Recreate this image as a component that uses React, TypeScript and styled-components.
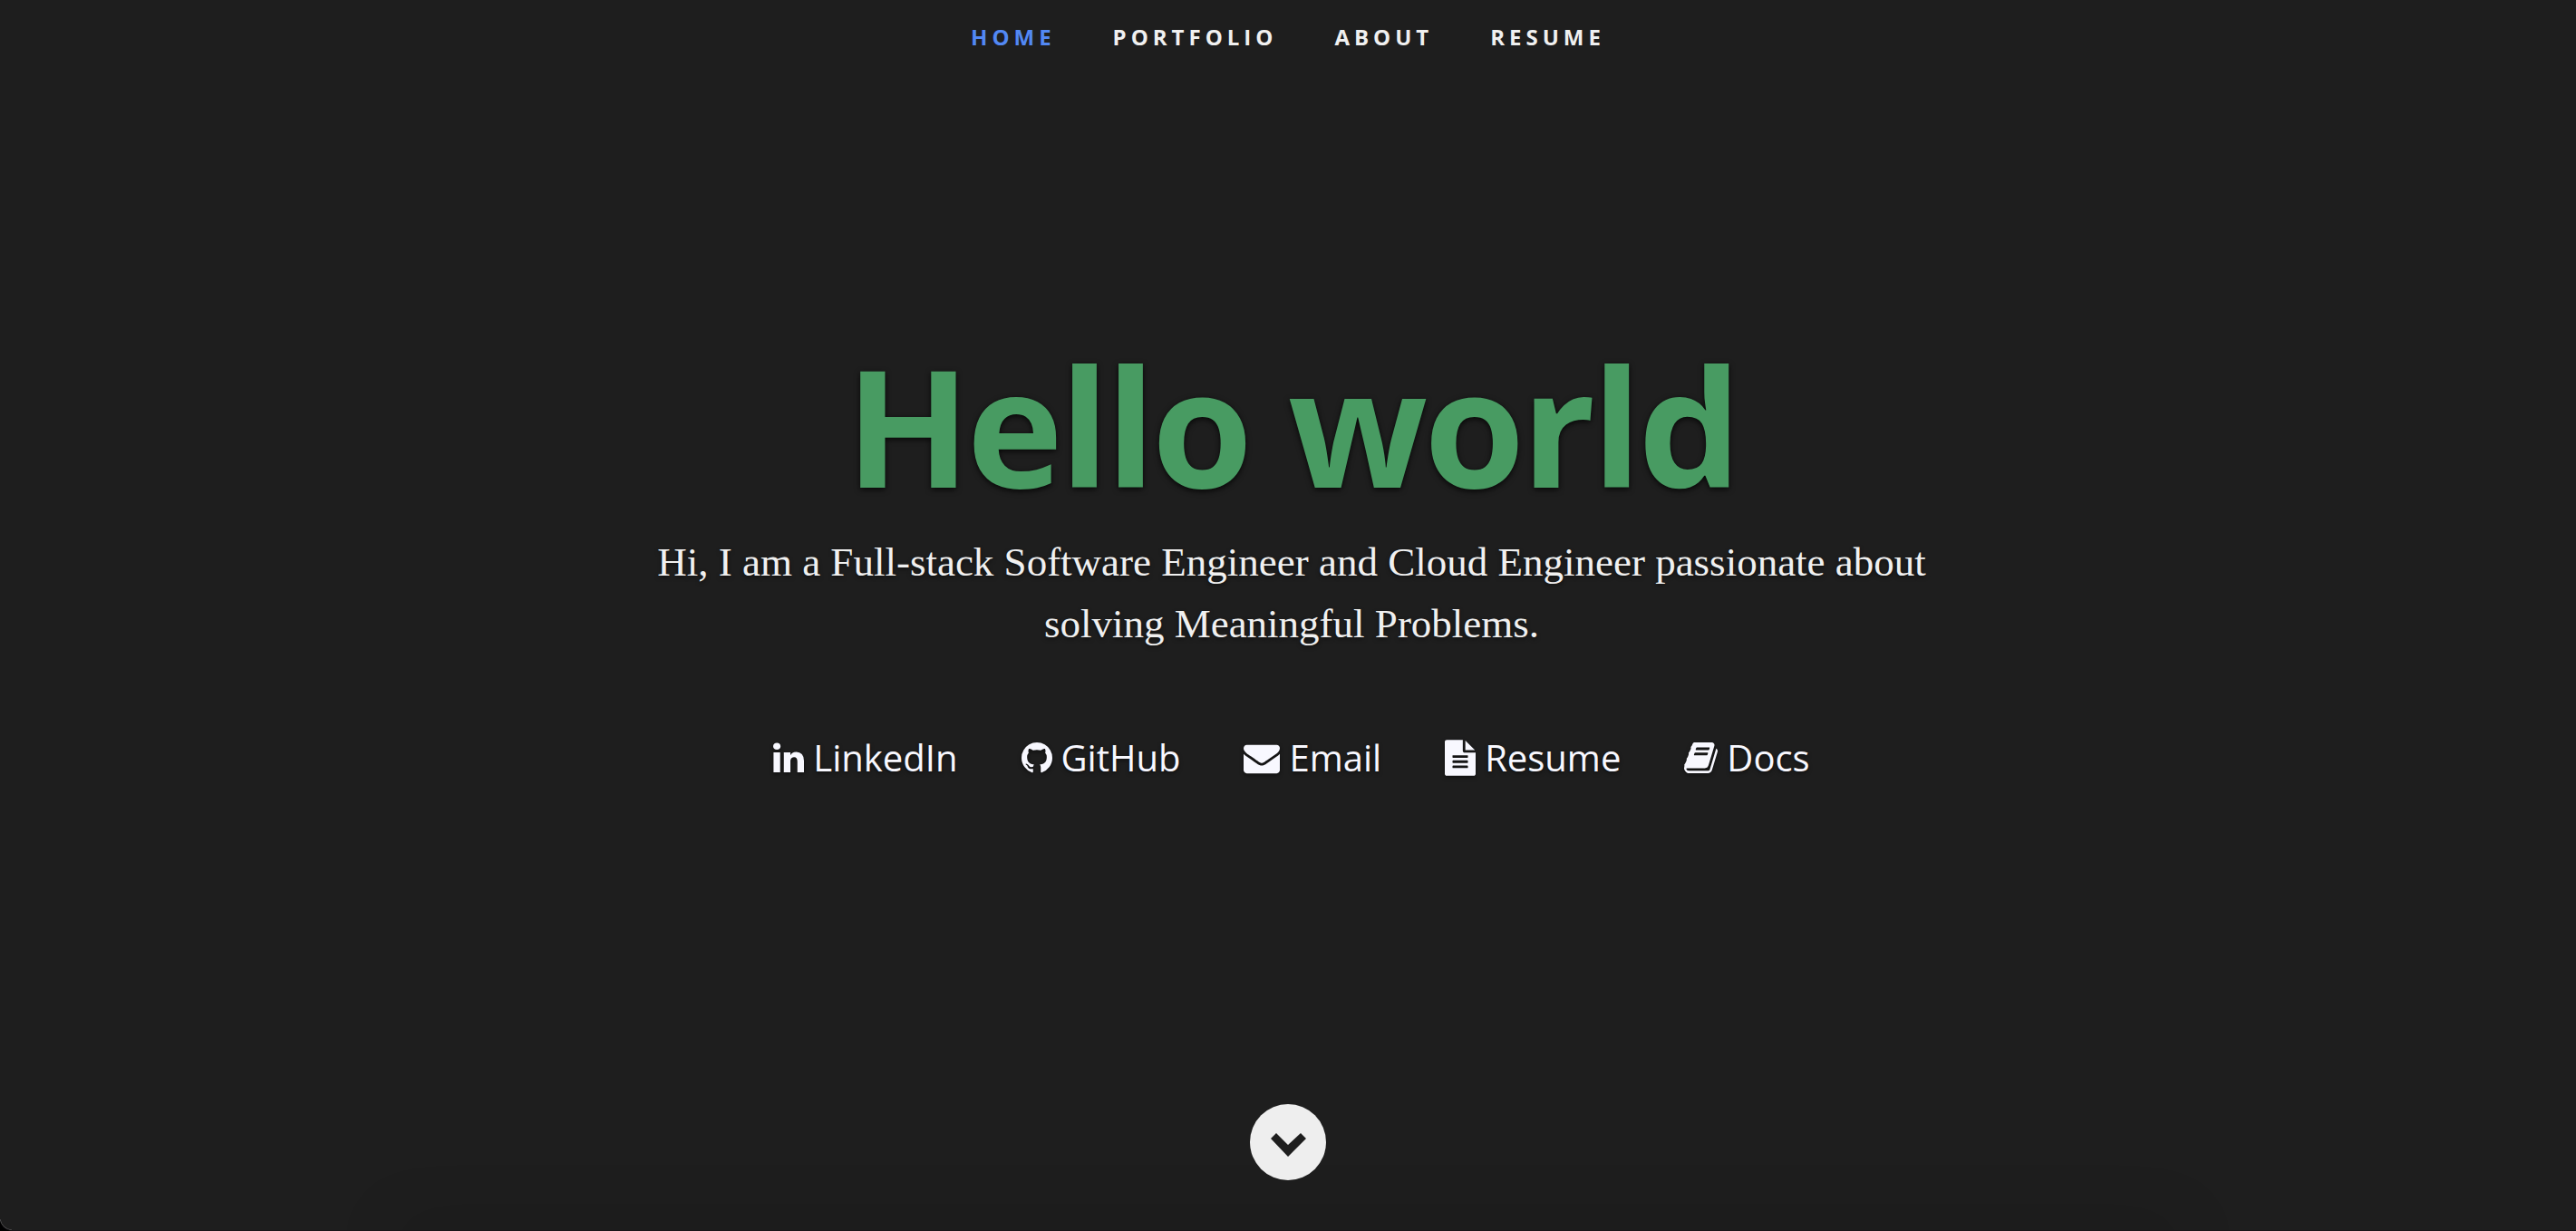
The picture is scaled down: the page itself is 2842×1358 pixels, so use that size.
import React from "react";
import styled, { createGlobalStyle } from "styled-components";

const GlobalStyle = createGlobalStyle`
  *, *::before, *::after { box-sizing: border-box; }
  body { margin: 0; background: #000000; }
`;

const sans = `"Open Sans", "Noto Sans", sans-serif`;

const Page = styled.header`
  position: relative;
  display: flex;
  flex-direction: column;
  align-items: center;
  min-height: 100vh;
  overflow: hidden;
  border-bottom: 1px solid #19151a;
  border-bottom-left-radius: 14px;
  background: #1e1e1e;
  font-family: ${sans};
  text-align: center;
`;

const Nav = styled.nav`
  width: 100%;
`;

const NavList = styled.ul`
  display: flex;
  justify-content: center;
  gap: 63px;
  margin: 0;
  padding: 17px 0;
  list-style: none;
`;

const NavLink = styled.a<{ $active?: boolean }>`
  display: block;
  color: ${(p) => (p.$active ? "#5288f4" : "#f0f0f0")};
  font-size: 24px;
  font-weight: 700;
  line-height: 48px;
  letter-spacing: 5px;
  text-decoration: none;
  text-transform: uppercase;
`;

const Banner = styled.main`
  flex: 1;
  display: flex;
  flex-direction: column;
  align-items: center;
  padding: 288px 28px 0 36px;
`;

const Title = styled.h1`
  margin: 0 0 18px;
  color: #489b62;
  font-size: 180px;
  font-weight: 700;
  line-height: 198px;
  letter-spacing: -4px;
  text-shadow: 0 2px 6px rgba(0, 0, 0, 0.8);
`;

const Intro = styled.p`
  max-width: 1500px;
  margin: 0;
  color: #f0f0f0;
  font-family: "Liberation Serif", serif;
  font-size: 45px;
  line-height: 68px;
  text-shadow: 0 2px 4px rgba(0, 0, 0, 0.5);
`;

const Social = styled.ul`
  display: flex;
  gap: 70px;
  margin: 84px 0 0;
  padding: 0;
  list-style: none;
`;

const SocialLink = styled.a`
  display: flex;
  align-items: center;
  gap: 10px;
  color: #f8f8ff;
  font-size: 40px;
  line-height: 60px;
  text-decoration: none;
  text-shadow: 0 2px 4px rgba(0, 0, 0, 0.5);

  svg {
    height: 40px;
    fill: currentColor;
    filter: drop-shadow(0 2px 2px rgba(0, 0, 0, 0.5));
  }
`;

const ScrollButton = styled.button`
  z-index: 1;
  width: 84px;
  height: 84px;
  margin: 0 0 55px;
  padding: 0;
  border: 0;
  border-radius: 50%;
  background: #eeeeee;
  cursor: pointer;

  svg {
    display: block;
    fill: #1e1e1e;
  }
`;

const BottomShade = styled.div`
  position: absolute;
  right: 440px;
  bottom: -24px;
  left: 440px;
  height: 20px;
  box-shadow: 0 0 72px rgba(0, 0, 0, 0.3);
`;

const CornerEdge = styled.svg`
  position: absolute;
  bottom: -1px;
  left: 0;
  width: 14px;
  height: 14px;
  fill: none;
  stroke: #5c5c5c;
`;

const sections = ["Home", "Portfolio", "About", "Resume"];

const links = [
  {
    label: "LinkedIn",
    width: 34,
    box: "128 0 1536 1792",
    path: "M477 625v991h-330v-991h330zm21-306q1 73-50.5 122t-135.5 49h-2q-82 0-132-49t-50-122q0-74 51.5-122.5t134.5-48.5 133 48.5 51 122.5zm1166 729v568h-329v-530q0-105-40.5-164.5t-126.5-59.5q-63 0-105.5 34.5t-63.5 85.5q-11 30-11 81v553h-329q2-399 2-647t-1-296l-1-48h329v144h-2q20-32 41-56t56.5-52 87-43.5 114.5-15.5q171 0 275 113.5t104 332.5z",
  },
  {
    label: "GitHub",
    width: 34,
    box: "128 0 1536 1792",
    path: "M896 128q209 0 385.5 103t279.5 279.5 103 385.5q0 251-146.5 451.5t-378.5 277.5q-27 5-40-7t-13-30q0-3 .5-76.5t.5-134.5q0-97-52-142 57-6 102.5-18t94-39 81-66.5 53-105 20.5-150.5q0-119-79-206 37-91-8-204-28-9-81 11t-92 44l-38 24q-93-26-192-26t-192 26q-16-11-42.5-27t-83.5-38.5-85-13.5q-45 113-8 204-79 87-79 206 0 85 20.5 150t52.5 105 80.5 67 94 39 102.5 18q-39 36-49 103-21 10-45 15t-57 5-65.5-21.5-55.5-62.5q-19-32-48.5-52t-49.5-24l-20-3q-21 0-29 4.5t-5 11.5 9 14 13 12l7 5q22 10 43.5 38t31.5 51l10 23q13 38 44 61.5t67 30 69.5 7 55.5-3.5l23-4q0 38 .5 88.5t.5 54.5q0 18-13 30t-40 7q-232-77-378.5-277.5t-146.5-451.5q0-209 103-385.5t279.5-279.5 385.5-103z",
  },
  {
    label: "Email",
    width: 40,
    box: "0 0 1792 1792",
    path: "M1792 710v794q0 66-47 113t-113 47h-1472q-66 0-113-47t-47-113v-794q44 49 101 87 362 246 497 345 57 42 92.5 65.5t94.5 48 110 24.5h2q51 0 110-24.5t94.5-48 92.5-65.5q170-123 498-345 57-39 100-87zm0-294q0 79-49 151t-122 123q-376 261-468 325-10 7-42.5 31t-54 38.5-52 32.5-57.5 27-50 9h-2q-23 0-50-9t-57.5-27-52-32.5-54-38.5-42.5-31q-91-64-262-182.5t-205-142.5q-62-42-117-115.5t-55-136.5q0-78 41.5-130t118.5-52h1472q65 0 112.5 47t47.5 113z",
  },
  {
    label: "Resume",
    width: 34,
    box: "128 0 1536 1792",
    path: "M1596 476q14 14 28 36h-472v-472q22 14 36 28zm-476 164h544v1056q0 40-28 68t-68 28h-1344q-40 0-68-28t-28-68v-1600q0-40 28-68t68-28h800v544q0 40 28 68t68 28zm160 736v-64q0-14-9-23t-23-9h-704q-14 0-23 9t-9 23v64q0 14 9 23t23 9h704q14 0 23-9t9-23zm0-256v-64q0-14-9-23t-23-9h-704q-14 0-23 9t-9 23v64q0 14 9 23t23 9h704q14 0 23-9t9-23zm0-256v-64q0-14-9-23t-23-9h-704q-14 0-23 9t-9 23v64q0 14 9 23t23 9h704q14 0 23-9t9-23z",
  },
  {
    label: "Docs",
    width: 37,
    box: "64 0 1664 1792",
    path: "M1703 478q40 57 18 129l-275 906q-19 64-76.5 107.5t-122.5 43.5h-923q-77 0-148.5-53.5t-99.5-131.5q-24-67-2-127 0-4 3-27t4-37q1-8-3-21.5t-3-19.5q2-11 8-21t16.5-23.5 16.5-23.5q23-38 45-91.5t30-91.5q3-10 .5-30t-.5-28q3-11 17-28t17-23q21-36 42-92t25-90q1-9-2.5-32t.5-28q4-13 22-30.5t22-22.5q19-26 42.5-84.5t27.5-96.5q1-8-3-25.5t-2-26.5q2-8 9-18t18-23 17-21q8-12 16.5-30.5t15-35 16-36 19.5-32 26.5-23.5 36-11.5 47.5 5.5l-1 3q38-9 51-9h761q74 0 114 56t18 130l-274 906q-36 119-71.5 153.5t-128.5 34.5h-869q-27 0-38 15-11 16-1 43 24 70 144 70h923q29 0 56-15.5t35-41.5l300-987q7-22 5-57 38 15 59 43zm-1064 2q-4 13 2 22.5t20 9.5h608q13 0 25.5-9.5t16.5-22.5l21-64q4-13-2-22.5t-20-9.5h-608q-13 0-25.5 9.5t-16.5 22.5zm-83 256q-4 13 2 22.5t20 9.5h608q13 0 25.5-9.5t16.5-22.5l21-64q4-13-2-22.5t-20-9.5h-608q-13 0-25.5 9.5t-16.5 22.5z",
  },
];

export default function App() {
  return (
    <>
      <GlobalStyle />
      <Page id="home">
        <Nav aria-label="Sections">
          <NavList>
            {sections.map((name, i) => (
              <li key={name}>
                <NavLink href={`#${name.toLowerCase()}`} $active={i === 0}>
                  {name}
                </NavLink>
              </li>
            ))}
          </NavList>
        </Nav>
        <Banner>
          <Title>Hello world</Title>
          <Intro>
            Hi, I am a Full-stack Software Engineer and Cloud Engineer passionate about solving
            Meaningful Problems.
          </Intro>
          <Social>
            {links.map((link) => (
              <li key={link.label}>
                <SocialLink href={`#${link.label.toLowerCase()}`}>
                  <svg width={link.width} viewBox={link.box} aria-hidden="true">
                    <path d={link.path} />
                  </svg>
                  <span>{link.label}</span>
                </SocialLink>
              </li>
            ))}
          </Social>
        </Banner>
        <ScrollButton type="button" aria-label="Scroll down">
          <svg viewBox="0 0 84 84" aria-hidden="true">
            <path d="M23 38l6-6 13 13 14-13 6 6-20 20z" />
          </svg>
        </ScrollButton>
        <BottomShade />
        <CornerEdge viewBox="0 0 14 14" aria-hidden="true">
          <path d="M0 1a14 14 0 0 0 13 12" />
        </CornerEdge>
      </Page>
    </>
  );
}
